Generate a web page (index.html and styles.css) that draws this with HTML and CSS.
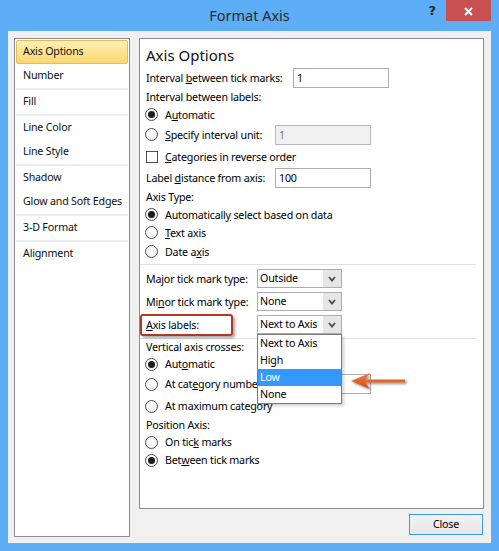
FILE: index.html
```html
<!DOCTYPE html>
<html>
<head>
<meta charset="utf-8">
<title>Format Axis</title>
<link rel="stylesheet" href="styles.css">
</head>
<body>
<div class="window">
  <div class="titlebar">
    <div class="tb-side"></div>
    <div class="title">Format Axis</div>
    <div class="tb-side tb-right">
      <span class="help">?</span>
      <span class="close"><svg width="9" height="9" viewBox="0 0 9 9"><path d="M1 1 L8 8 M8 1 L1 8" stroke="#fff" stroke-width="2" fill="none"/></svg></span>
    </div>
  </div>
  <div class="client">
    <div class="main">
      <div class="nav">
        <div class="nav-item selected">Axis Options</div>
        <div class="nav-item">Number</div>
        <div class="nav-item sep">Fill</div>
        <div class="nav-item sep">Line Color</div>
        <div class="nav-item">Line Style</div>
        <div class="nav-item sep">Shadow</div>
        <div class="nav-item">Glow and Soft Edges</div>
        <div class="nav-item sep">3-D Format</div>
        <div class="nav-item sep">Alignment</div>
      </div>
      <div class="right">
        <div class="panel">
          <div class="heading">Axis Options</div>
          <div class="row h21">
            <span class="lbl w147">Interval <u>b</u>etween tick marks:</span>
            <span class="input w96">1</span>
          </div>
          <div class="row h18"><span class="lbl">Interval between labels:</span></div>
          <div class="row h17"><span class="radio on"></span><span class="lbl">A<u>u</u>tomatic</span></div>
          <div class="row h23">
            <span class="radio"></span><span class="lbl w110"><u>S</u>pecify interval unit:</span>
            <span class="input w96 disabled">1</span>
          </div>
          <div class="row h21"><span class="check"></span><span class="lbl"><u>C</u>ategories in reverse order</span></div>
          <div class="row h21">
            <span class="lbl w129">Label <u>d</u>istance from axis:</span>
            <span class="input w96">100</span>
          </div>
          <div class="row h18"><span class="lbl">Axis Type:</span></div>
          <div class="row h17"><span class="radio on"></span><span class="lbl">Automaticall<u>y</u> select based on data</span></div>
          <div class="row h19"><span class="radio"></span><span class="lbl"><u>T</u>ext axis</span></div>
          <div class="row h19"><span class="radio"></span><span class="lbl">Date a<u>x</u>is</span></div>
          <div class="divider d1"></div>
          <div class="row h23">
            <span class="lbl w111">Ma<u>j</u>or tick mark type:</span>
            <span class="combo"><span class="combo-text">Outside</span><span class="combo-btn"><svg width="8" height="6" viewBox="0 0 8 6"><path d="M1 1 L4 4.5 L7 1" stroke="#4a4a4a" stroke-width="1.8" fill="none"/></svg></span></span>
          </div>
          <div class="row h23">
            <span class="lbl w111">Mi<u>n</u>or tick mark type:</span>
            <span class="combo"><span class="combo-text">None</span><span class="combo-btn"><svg width="8" height="6" viewBox="0 0 8 6"><path d="M1 1 L4 4.5 L7 1" stroke="#4a4a4a" stroke-width="1.8" fill="none"/></svg></span></span>
          </div>
          <div class="row h23 axis-labels">
            <span class="redbox"></span>
            <span class="lbl w111"><u>A</u>xis labels:</span>
            <span class="combo open"><span class="combo-text">Next to Axis</span><span class="combo-btn"><svg width="8" height="6" viewBox="0 0 8 6"><path d="M1 1 L4 4.5 L7 1" stroke="#4a4a4a" stroke-width="1.8" fill="none"/></svg></span>
              <span class="dropdown">
                <span class="dd-item">Next to Axis</span>
                <span class="dd-item">High</span>
                <span class="dd-item active">Low</span>
                <span class="dd-item">None</span>
              </span>
              <svg class="arrow" width="60" height="22" viewBox="0 0 60 22">
                <defs>
                  <linearGradient id="ag" x1="0" y1="0" x2="0" y2="1">
                    <stop offset="0" stop-color="#f07a3a"/>
                    <stop offset="1" stop-color="#c9511c"/>
                  </linearGradient>
                  <filter id="sh" x="-20%" y="-40%" width="140%" height="180%">
                    <feDropShadow dx="1.5" dy="1.5" stdDeviation="1.2" flood-color="#000" flood-opacity="0.45"/>
                  </filter>
                </defs>
                <path d="M2 10 L21 2 L16 8.6 L56 8.4 L56 11.6 L16 11.4 L21 18 Z" fill="url(#ag)" filter="url(#sh)"/>
              </svg>
            </span>
          </div>
          <div class="divider d2"></div>
          <div class="row h16"><span class="lbl">Vertical axis crosses:</span></div>
          <div class="row h18"><span class="radio on"></span><span class="lbl">Aut<u>o</u>matic</span></div>
          <div class="row h22">
            <span class="radio"></span><span class="lbl w110">At cat<u>e</u>gory number:</span>
            <span class="input w96"></span>
          </div>
          <div class="row h22"><span class="radio"></span><span class="lbl">At maximum category</span></div>
          <div class="row h16"><span class="lbl">Position Axis:</span></div>
          <div class="row h18"><span class="radio"></span><span class="lbl">On tic<u>k</u> marks</span></div>
          <div class="row h18"><span class="radio on"></span><span class="lbl">Bet<u>w</u>een tick marks</span></div>
        </div>
        <div class="footer">
          <div class="btn">Close</div>
        </div>
      </div>
    </div>
  </div>
</div>
</body>
</html>
```

FILE: styles.css
```css
* { box-sizing: border-box; }
html, body { margin: 0; padding: 0; }
body {
  width: 499px;
  height: 551px;
  overflow: hidden;
  font-family: "Noto Sans", "Open Sans", sans-serif;
  font-size: 10.7px;
  letter-spacing: -0.2px;
  color: #000;
}
u { text-decoration: underline; text-underline-offset: 1px; }

.window {
  width: 499px;
  height: 551px;
  background: #5eaef7;
  display: flex;
  flex-direction: column;
}

.titlebar {
  height: 31px;
  display: grid;
  grid-template-columns: 1fr auto 1fr;
  align-items: start;
}
.title {
  font-size: 14.5px;
  letter-spacing: 0;
  color: #2a2a2a;
  line-height: 30px;
  text-align: center;
}
.tb-right {
  display: flex;
  justify-content: flex-end;
  align-items: flex-start;
  padding-right: 8px;
}
.help {
  font-family: "DejaVu Sans", sans-serif;
  font-weight: bold;
  font-size: 13px;
  letter-spacing: 0;
  color: #262626;
  line-height: 20px;
  margin-right: 10px;
  margin-top: 1px;
}
.close {
  width: 45px;
  height: 21px;
  background: #c75050;
  display: flex;
  align-items: center;
  justify-content: center;
  padding-top: 2px;
}

.client {
  margin: 0 8px 8px 8px;
  height: 512px;
  background: #f0f0f0;
}
.main {
  display: flex;
  gap: 9px;
  padding: 7px 7px 6px 6px;
  height: 100%;
}

.nav {
  width: 116px;
  height: 499px;
  background: #fff;
  border: 1px solid #8a8d93;
  padding: 1px;
}
.nav-item {
  height: 24px;
  line-height: 23px;
  padding-left: 7px;
  white-space: nowrap;
  color: #111;
}
.nav-item.sep {
  border-top: 2px solid #ebedf1;
  height: 26px;
}
.nav-item.selected {
  background: linear-gradient(#fdefb8, #fbd86f);
  border: 1px solid #e2bd58;
  border-radius: 2px;
  height: 24px;
  line-height: 21px;
  padding-left: 6px;
}

.right {
  width: 345px;
  display: flex;
  flex-direction: column;
}
.panel {
  height: 471px;
  background: #fff;
  border: 1px solid #8a8d93;
  padding: 5px 0 0 6px;
}
.heading {
  font-size: 15px;
  letter-spacing: 0;
  height: 23px;
  line-height: 22px;
  color: #111;
}
.row {
  display: flex;
  align-items: center;
  white-space: nowrap;
}
.h16 { height: 16px; }
.h17 { height: 17px; }
.h18 { height: 18px; }
.h19 { height: 19px; }
.h21 { height: 21px; }
.h22 { height: 22px; }
.h23 { height: 23px; }
.lbl { display: inline-block; }
.w110 { width: 110px; }
.w111 { width: 111px; }
.w129 { width: 129px; }
.w147 { width: 147px; }
.w96 { width: 96px; }

.input {
  height: 20px;
  border: 1px solid #abadb3;
  background: #fff;
  padding-left: 3px;
  line-height: 18px;
}
.input.disabled {
  background: #f0f0f0;
  border-color: #b9b9b9;
  color: #7a7a7a;
}

.radio {
  width: 13px;
  height: 13px;
  border-radius: 50%;
  border: 1px solid #4b4b4b;
  background: linear-gradient(#fff, #f2f2f2);
  margin-left: -1px;
  margin-right: 7px;
  flex: none;
  display: grid;
  place-items: center;
}
.radio.on::after {
  content: "";
  width: 7px;
  height: 7px;
  border-radius: 50%;
  background: #1c1c1c;
}
.check {
  width: 12px;
  height: 12px;
  border: 1px solid #4b4b4b;
  background: #fff;
  margin-right: 7px;
  flex: none;
}

.divider {
  height: 1px;
  background: #e2e2e2;
  margin-left: -6px;
  margin-right: 7px;
}
.d1 { margin-top: 3px; margin-bottom: 2px; }
.d2 { margin-top: 2px; margin-bottom: 0; }

.combo {
  position: relative;
  width: 85px;
  height: 19px;
  border: 1px solid #abadb3;
  background: #fff;
  display: flex;
}
.combo-text {
  flex: 1;
  padding-left: 2px;
  line-height: 17px;
}
.combo-btn {
  width: 18px;
  background: #e6e6e6;
  display: grid;
  place-items: center;
}

.axis-labels { position: relative; }
.redbox {
  position: absolute;
  left: -6px;
  top: 1px;
  width: 93px;
  height: 22px;
  border: 2px solid #b3362a;
  border-radius: 3px;
  box-shadow: 2px 2px 3px rgba(0,0,0,0.35);
}

.dropdown {
  position: absolute;
  left: -1px;
  top: 18px;
  width: 85px;
  height: 70px;
  background: #fff;
  border: 1px solid #7a7a7a;
  box-shadow: 2px 2px 3px rgba(0,0,0,0.18);
  display: flex;
  flex-direction: column;
  z-index: 5;
}
.dd-item {
  height: 17px;
  line-height: 17px;
  padding-left: 2px;
}
.dd-item.active {
  background: #3399ff;
  color: #fff;
}
.arrow {
  position: absolute;
  left: 91px;
  top: 55px;
  z-index: 6;
}

.footer {
  display: flex;
  justify-content: flex-end;
  margin-top: 5px;
}
.btn {
  width: 74px;
  height: 21px;
  border: 1px solid #3c9ae8;
  background: linear-gradient(#f3f3f3, #e6e6e6);
  text-align: center;
  line-height: 19px;
  margin-right: 1px;
}
```
